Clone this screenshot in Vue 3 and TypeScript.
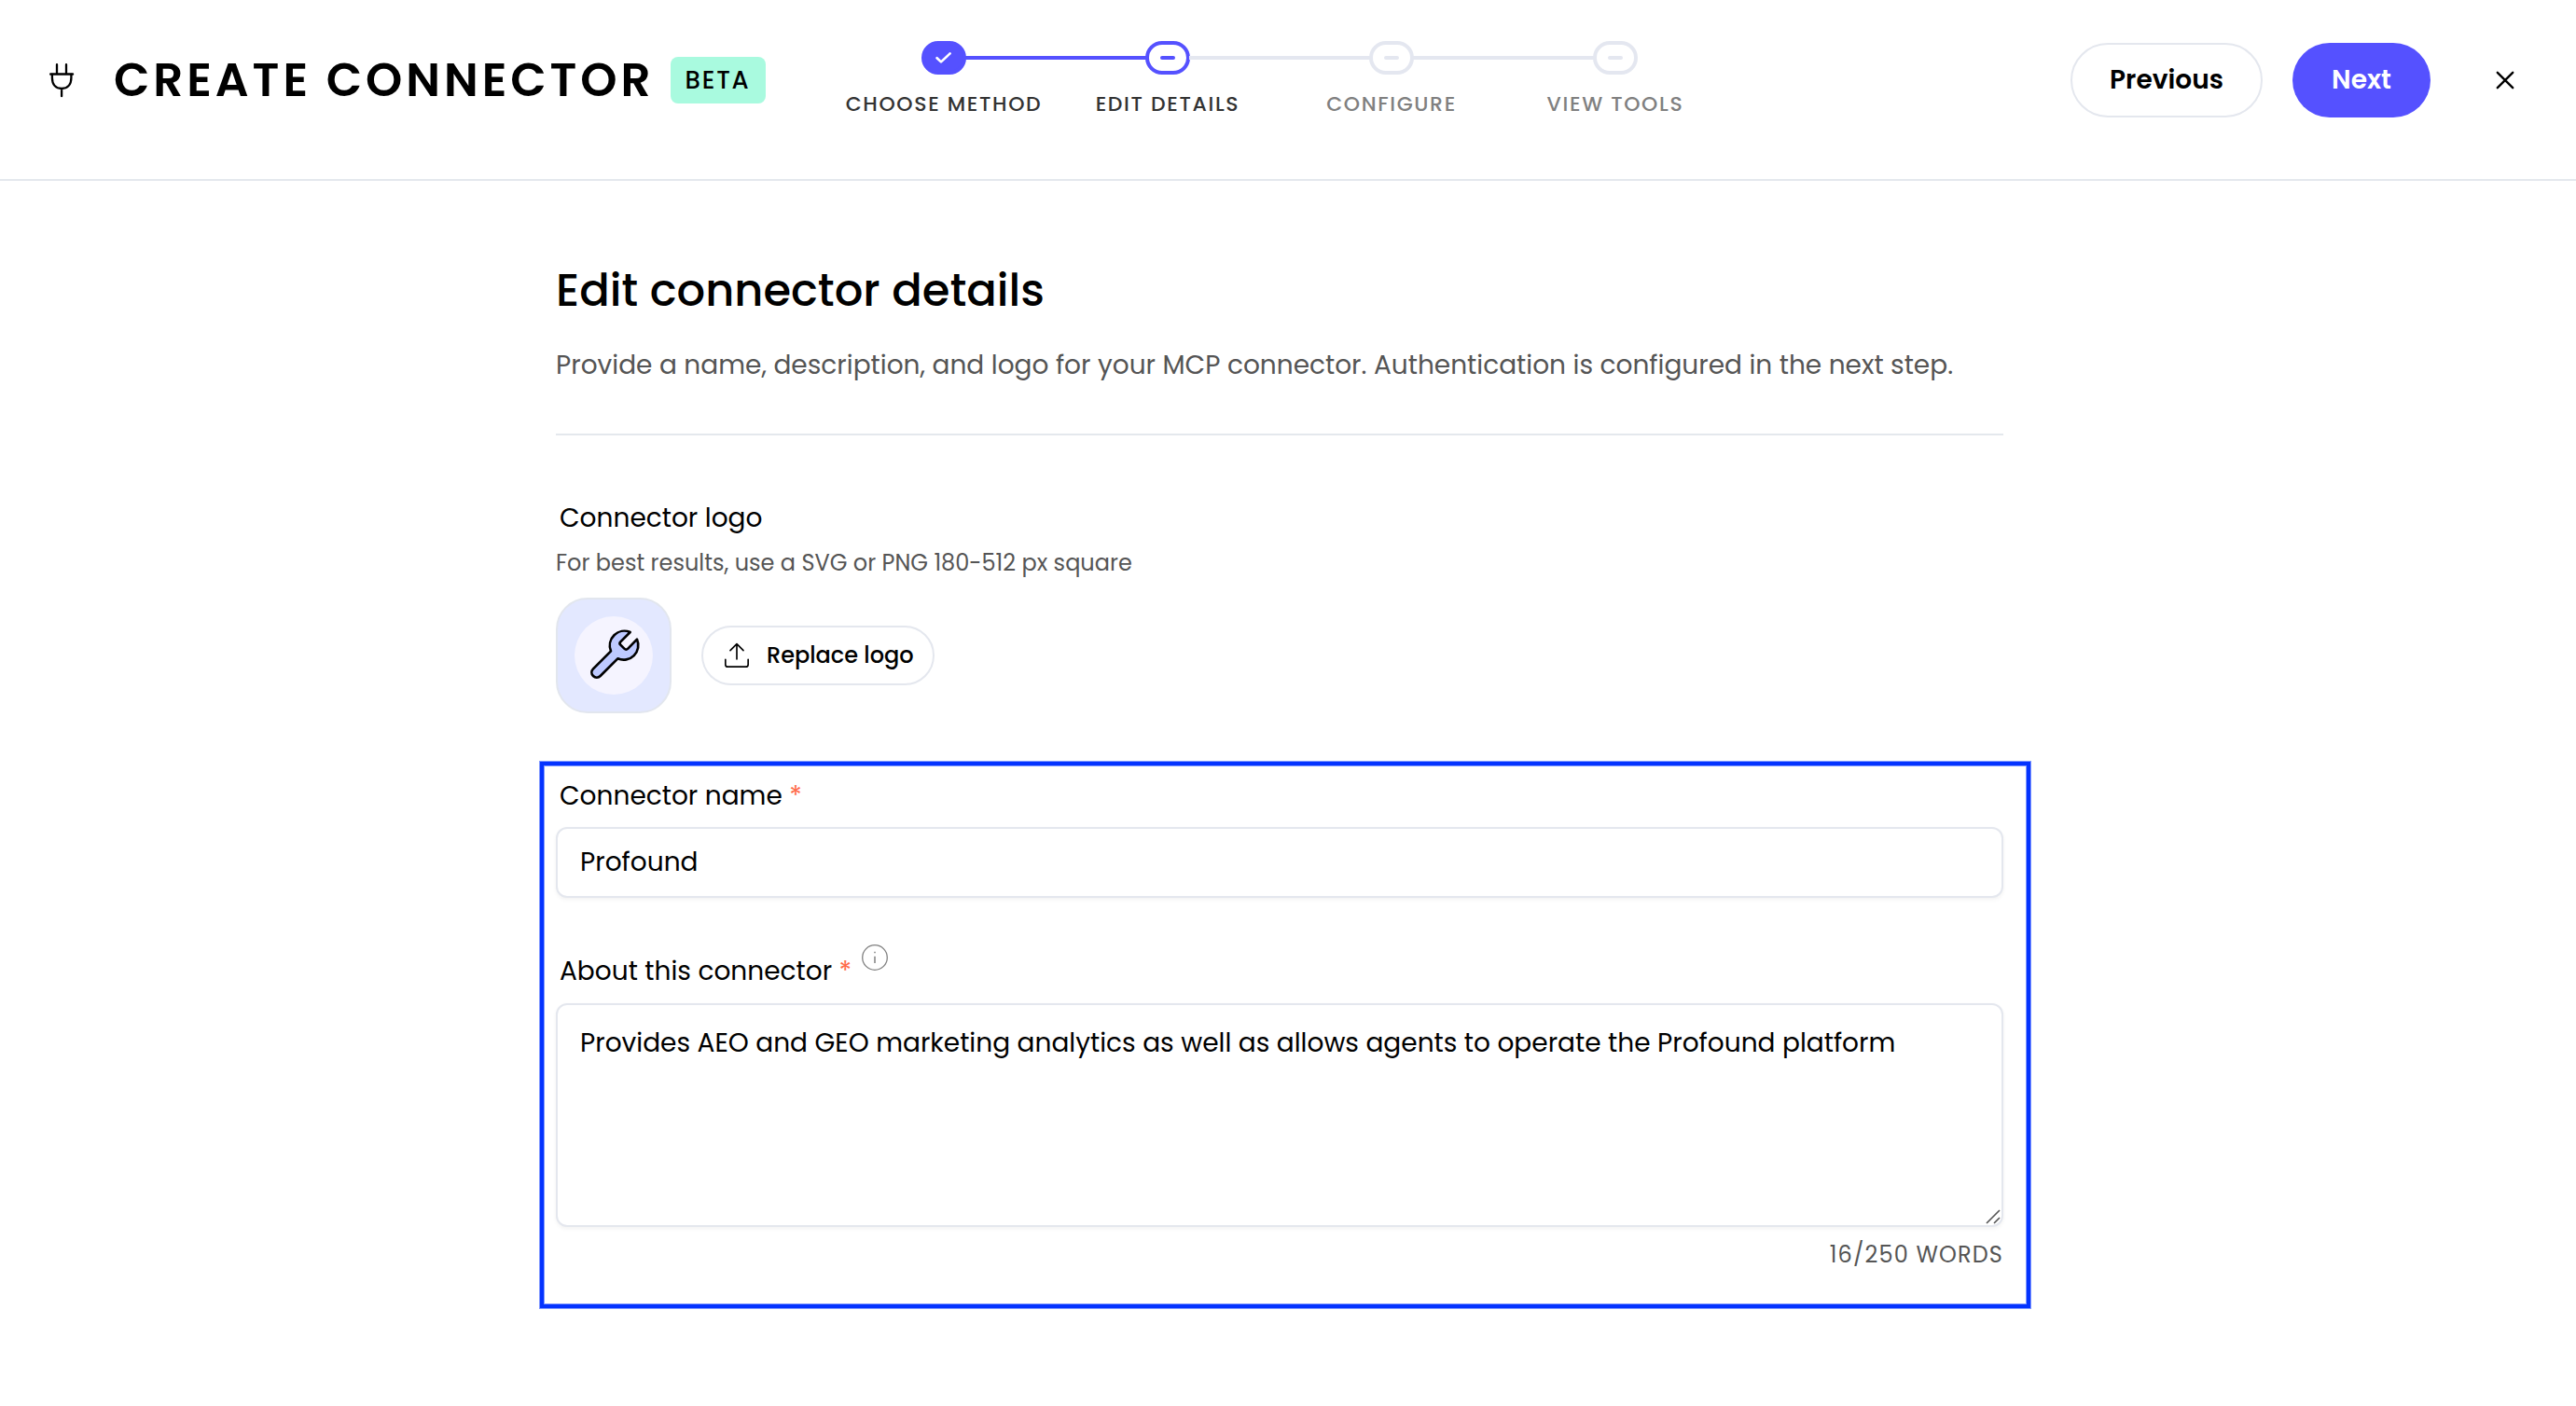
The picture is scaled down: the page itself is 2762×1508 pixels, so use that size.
<script setup lang="ts">
import { ref, computed } from 'vue'

type StepState = 'done' | 'current' | 'upcoming'
interface Step {
  label: string
  state: StepState
}

const steps: Step[] = [
  { label: 'Choose method', state: 'done' },
  { label: 'Edit details', state: 'current' },
  { label: 'Configure', state: 'upcoming' },
  { label: 'View tools', state: 'upcoming' },
]

const WORD_LIMIT = 250
const name = ref('Profound')
const about = ref(
  'Provides AEO and GEO marketing analytics as well as allows agents to operate the Profound platform',
)
const wordCount = computed(() => about.value.trim().split(/\s+/).filter(Boolean).length)
</script>

<template>
  <div class="page">
    <header class="topbar">
      <div class="brand">
        <svg class="plug" viewBox="0 0 28 38" fill="none" stroke="#000" stroke-linecap="round">
          <path d="M9 2.2V12M19 2.2V12" stroke-width="2.3" />
          <path d="M2.3 12.5H25.9" stroke-width="2.6" />
          <path d="M3.9 13V16.5C3.9 24 8 28 14.1 28C20.2 28 24.4 24 24.4 16.5V13M14.1 28V36.2" stroke-width="2.3" />
        </svg>
        <h1 class="title">Create connector</h1>
        <span class="badge">Beta</span>
      </div>

      <ol class="steps">
        <li v-for="step in steps" :key="step.label" class="step" :class="step.state">
          <span class="pill">
            <svg v-if="step.state === 'done'" viewBox="0 0 24 18" width="24" height="18" fill="none">
              <path d="M4.6 9.2L9 13.4L18.6 4.4" stroke="#fff" stroke-width="2.6" stroke-linecap="round" stroke-linejoin="round" />
            </svg>
            <i v-else class="dash"></i>
          </span>
          <span class="step-label">{{ step.label }}</span>
        </li>
      </ol>

      <div class="actions">
        <button class="btn btn-outline" type="button">Previous</button>
        <button class="btn btn-primary" type="button">Next</button>
        <button class="close" type="button" aria-label="Close">
          <svg viewBox="0 0 20 20" width="20" height="20" fill="none">
            <path d="M1.8 1.8L18.2 18.2M18.2 1.8L1.8 18.2" stroke="#000" stroke-width="2.4" stroke-linecap="round" />
          </svg>
        </button>
      </div>
    </header>

    <main class="content">
      <h2 class="heading">Edit connector details</h2>
      <p class="lead">
        Provide a name, description, and logo for your MCP connector. Authentication is configured in the next step.
      </p>
      <hr class="divider" />

      <section class="logo-section">
        <span class="label">Connector logo</span>
        <p class="hint">For best results, use a SVG or PNG 180-512 px square</p>
        <div class="logo-row">
          <div class="logo-tile">
            <svg viewBox="24 24 360 360" width="120" height="120">
              <circle cx="204" cy="204" r="126" fill="#f5f4ff" />
              <path
                d="M257 129L226 160Q221 165 226 170L238 182Q244 188 250 182L279 152A47 47 0 0 1 217 214L161 270A16 16 0 0 1 138 247L195 190A47 47 0 0 1 257 129Z"
                fill="#bdc9ff"
                stroke="#000"
                stroke-width="8"
                stroke-linejoin="round"
              />
            </svg>
          </div>
          <button class="replace" type="button">
            <svg viewBox="558 162 84 84" width="28" height="28" fill="none" stroke="#000" stroke-width="5" stroke-linecap="round" stroke-linejoin="round">
              <path d="M563.5 217V233Q563.5 240.5 571 240.5H629Q636.5 240.5 636.5 233V217" />
              <path d="M600 216V167M579 188L600 167L621 188" />
            </svg>
            Replace logo
          </button>
        </div>
      </section>

      <section class="fields">
        <label class="label" for="connector-name">Connector name <span class="req">*</span></label>
        <input id="connector-name" v-model="name" class="input" type="text" />

        <div class="about-row">
          <label class="label" for="connector-about">About this connector <span class="req">*</span></label>
          <svg class="info" viewBox="0 0 28 28" width="28" height="28" fill="none">
            <circle cx="14" cy="14" r="13.3" stroke="#808080" stroke-width="1.3" />
            <path d="M14 12.7V20" stroke="#a0a0a0" stroke-width="2" />
            <path d="M14 7.7V9.2" stroke="#a0a0a0" stroke-width="2" />
          </svg>
        </div>
        <div class="area-wrap">
          <textarea id="connector-about" v-model="about" class="area" spellcheck="false"></textarea>
          <svg class="grip" viewBox="0 0 16 16" width="16" height="16" fill="none" stroke="#555" stroke-width="1.6">
            <path d="M1 15L15 1M9 15L15 9" />
          </svg>
        </div>
        <p class="counter">{{ wordCount }}/{{ WORD_LIMIT }} words</p>
      </section>
    </main>
  </div>
</template>

<style>
body {
  background: #fff;
}
</style>

<style scoped>
.page,
.page * {
  box-sizing: border-box;
}
.page {
  width: 100%;
  min-height: 1508px;
  background: #fff;
  color: #000;
  font-family: Poppins, Inter, sans-serif;
  font-size: 28px;
  line-height: 42px;
}
h1,
h2,
p,
ol {
  margin: 0;
  padding: 0;
}
button,
input,
textarea {
  font: inherit;
  color: inherit;
  margin: 0;
}

/* Top bar */
.topbar {
  display: flex;
  height: 194px;
  border-bottom: 2px solid #e4e8ed;
}
.brand {
  display: flex;
  align-items: center;
  width: 892px;
  height: 172px;
  padding-left: 52px;
}
.plug {
  width: 28px;
  height: 38px;
  margin-right: 42px;
}
.title {
  font-size: 50px;
  line-height: 60px;
  font-weight: 600;
  letter-spacing: 3.94px;
  text-transform: uppercase;
  white-space: nowrap;
}
.badge {
  width: 102px;
  height: 50px;
  margin-left: 17px;
  padding-left: 16px;
  border-radius: 8px;
  background: #a9fadf;
  font-size: 26px;
  line-height: 50px;
  font-weight: 500;
  letter-spacing: 1.8px;
  text-transform: uppercase;
}
.steps {
  display: grid;
  grid-template-columns: repeat(4, 240px);
  padding-top: 44px;
  list-style: none;
}
.step {
  position: relative;
  display: flex;
  flex-direction: column;
  align-items: center;
}
.step + .step::before {
  content: '';
  position: absolute;
  top: 16px;
  right: calc(50% + 23px);
  width: 194px;
  height: 4px;
  background: #e4e7f0;
}
.step.current::before {
  background: #5551ff;
}
.pill {
  display: flex;
  align-items: center;
  justify-content: center;
  width: 48px;
  height: 36px;
  border: 4px solid #e4e7f0;
  border-radius: 18px;
}
.dash {
  width: 16px;
  height: 4px;
  border-radius: 2px;
  background: #e4e7f0;
}
.done .pill {
  border-color: #5551ff;
  background: #5551ff;
}
.current .pill {
  border-color: #5551ff;
}
.current .dash {
  background: #5551ff;
}
.step-label {
  margin-top: 16px;
  font-size: 22px;
  line-height: 32px;
  font-weight: 500;
  letter-spacing: 1.65px;
  color: #333;
  text-transform: uppercase;
  white-space: nowrap;
}
.upcoming .step-label {
  color: #808080;
}
.actions {
  display: flex;
  align-items: center;
  height: 172px;
  margin-left: auto;
  padding-right: 66px;
}
.btn {
  height: 80px;
  padding: 0;
  border-radius: 40px;
  font-weight: 600;
}
.btn-outline {
  width: 206px;
  border: 2px solid #e4e7ee;
  background: #fff;
}
.btn-primary {
  width: 148px;
  margin-left: 32px;
  border: 0;
  background: #5551ff;
  color: #fff;
}
.close {
  display: flex;
  margin-left: 70px;
  padding: 0;
  border: 0;
  background: none;
}

/* Form column */
.content {
  width: 1552px;
  margin-left: 596px;
  padding-top: 88px;
}
.heading {
  font-size: 48px;
  line-height: 60px;
  font-weight: 500;
}
.lead {
  margin-top: 29px;
  color: #555;
  white-space: nowrap;
}
.divider {
  height: 2px;
  margin: 52px 0 0;
  border: 0;
  background: #e4e8ed;
}
.logo-section {
  margin-top: 68px;
}
.label {
  display: block;
  padding-left: 4px;
  white-space: nowrap;
}
.req {
  color: #ff6b4a;
}
.hint {
  margin-top: 9px;
  font-size: 24px;
  line-height: 36px;
  color: #555;
}
.logo-row {
  display: flex;
  align-items: center;
  margin-top: 19px;
}
.logo-tile {
  display: flex;
  width: 124px;
  height: 124px;
  border: 2px solid #e2e6ee;
  border-radius: 34px;
  background: #e3e8ff;
}
.replace {
  display: flex;
  align-items: center;
  gap: 18px;
  width: 250px;
  height: 64px;
  margin-left: 32px;
  padding: 0 0 0 22px;
  border: 2px solid #e4e7ee;
  border-radius: 32px;
  background: #fff;
  font-size: 24px;
  font-weight: 500;
  white-space: nowrap;
}
.fields {
  height: 586px;
  margin: 52px -29px 0 -17px;
  padding: 12px 25px 0 13px;
  border: 4px solid #0433ff;
  box-shadow:
    0 0 0 1px rgba(4, 51, 255, 0.5),
    inset 0 0 0 1px rgba(4, 51, 255, 0.5);
}
.input,
.area {
  display: block;
  width: 100%;
  border: 2px solid #e4e7ee;
  border-radius: 12px;
  outline: none;
  background: #fff;
  box-shadow: 0 2px 4px rgba(0, 0, 0, 0.05);
}
.input {
  height: 76px;
  margin-top: 12px;
  padding: 0 24px;
}
.about-row {
  display: flex;
  margin-top: 58px;
}
.info {
  margin: -8px 0 0 11px;
}
.area-wrap {
  position: relative;
  margin-top: 13px;
}
.area {
  height: 240px;
  padding: 20px 24px;
  resize: none;
  overflow: hidden;
}
.grip {
  position: absolute;
  right: 3px;
  bottom: 3px;
}
.counter {
  margin-top: 12px;
  font-size: 24px;
  line-height: 36px;
  letter-spacing: 1.13px;
  color: #555;
  text-align: right;
  text-transform: uppercase;
}
</style>
